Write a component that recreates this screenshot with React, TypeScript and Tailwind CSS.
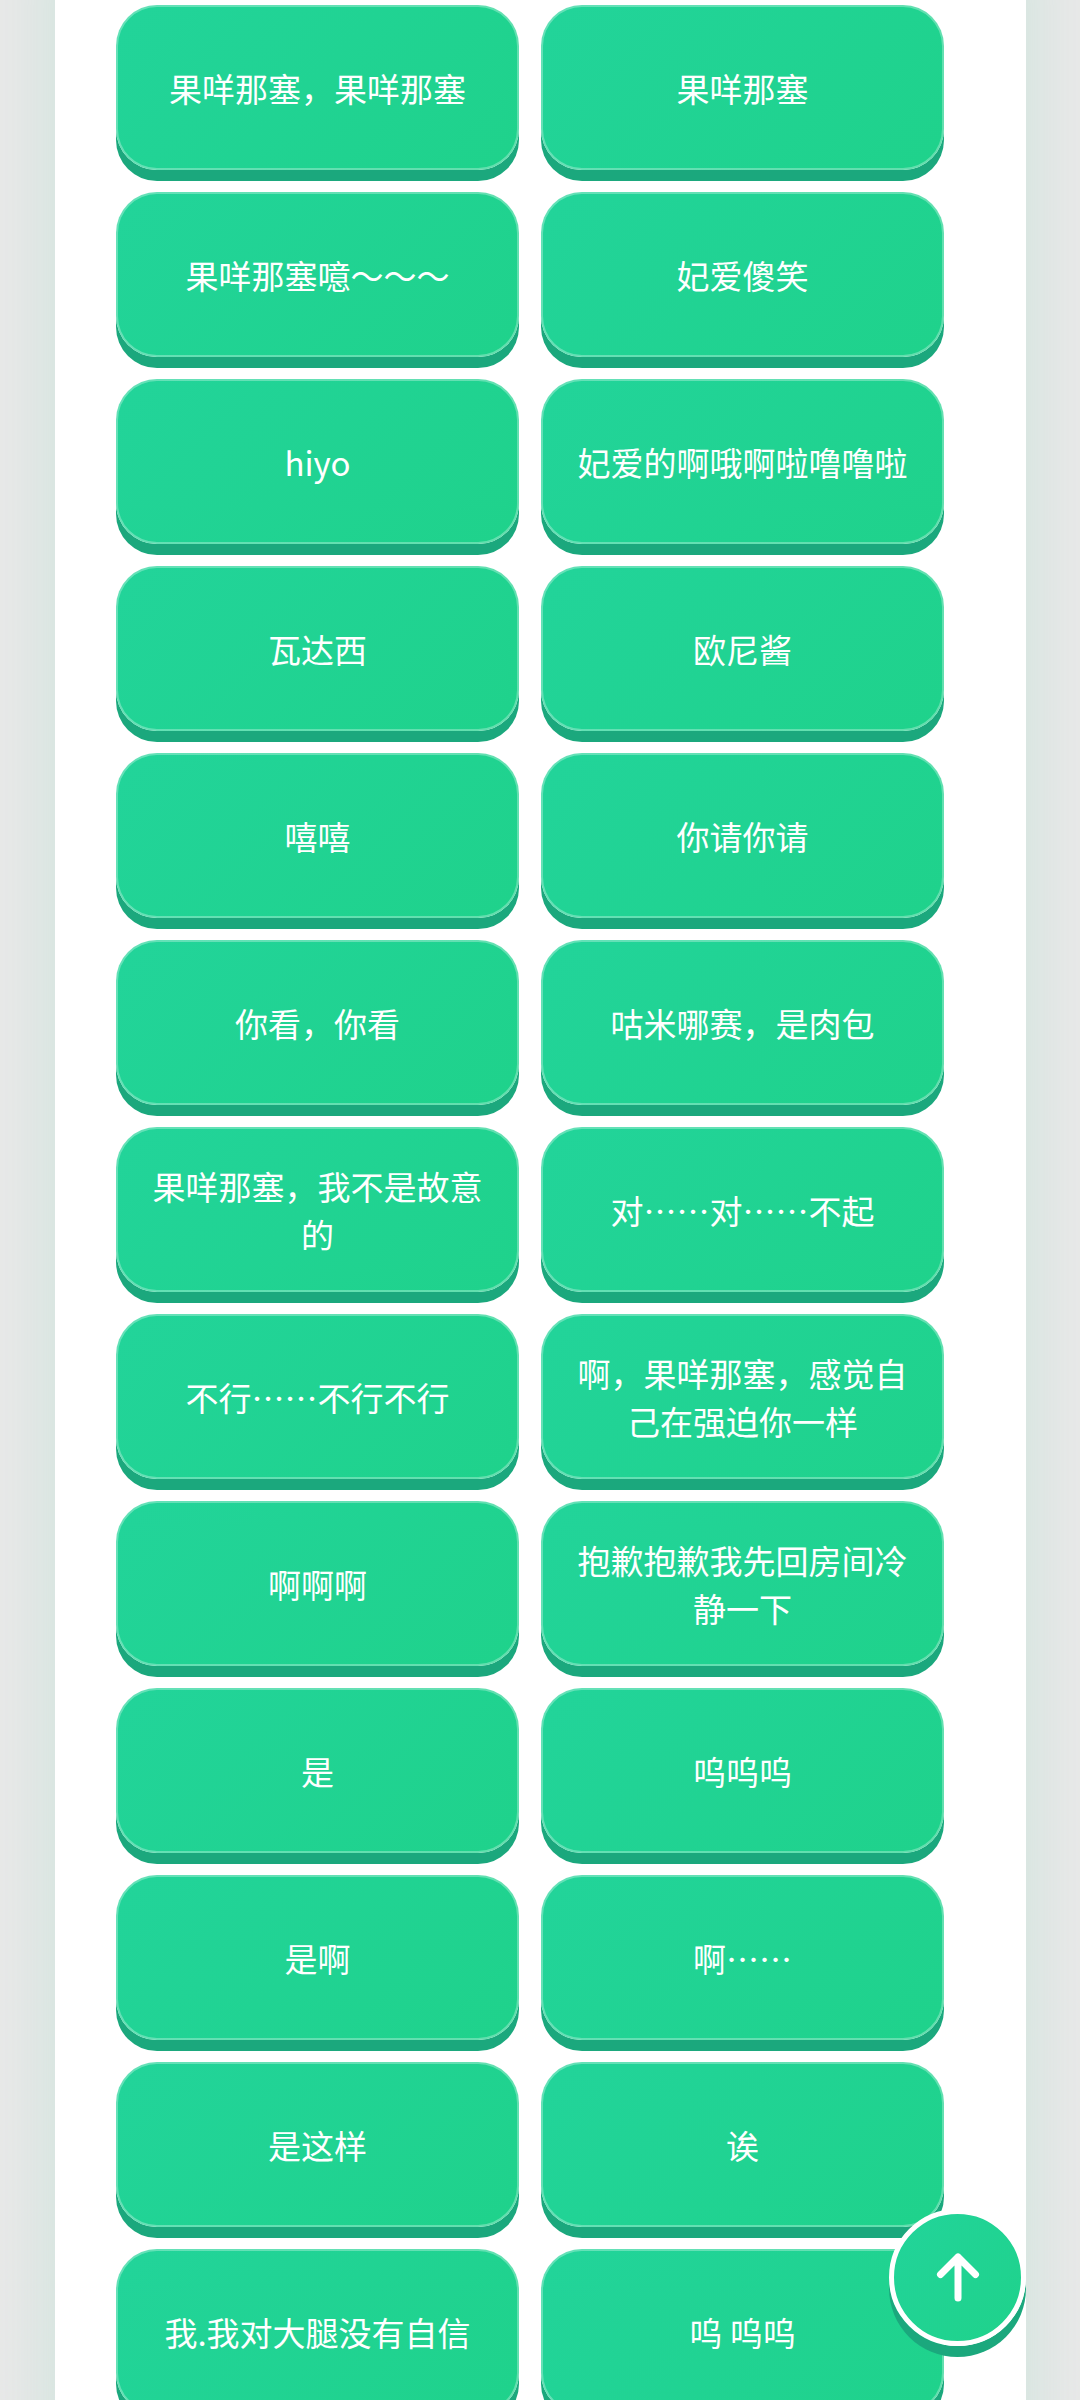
import { useRef } from "react";

const voices = [
  "果咩那塞，果咩那塞",
  "果咩那塞",
  "果咩那塞噫～～～",
  "妃爱傻笑",
  "hiyo",
  "妃爱的啊哦啊啦噜噜啦",
  "瓦达西",
  "欧尼酱",
  "嘻嘻",
  "你请你请",
  "你看，你看",
  "咕米哪赛，是肉包",
  "果咩那塞，我不是故意的",
  "对……对……不起",
  "不行……不行不行",
  "啊，果咩那塞，感觉自己在强迫你一样",
  "啊啊啊",
  "抱歉抱歉我先回房间冷静一下",
  "是",
  "呜呜呜",
  "是啊",
  "啊……",
  "是这样",
  "诶",
  "我.我对大腿没有自信",
  "呜 呜呜",
];

function VoiceButton({ label }: { label: string }) {
  return (
    <button
      type="button"
      className="flex h-[165px] items-center justify-center rounded-[41px] border-2 border-white/30 bg-linear-135 from-[#22d49a] to-[#1fd28b] bg-origin-border px-8 text-center text-[33px] leading-[48px] text-white shadow-[0_11px_0_#1ba87d] active:translate-y-1"
    >
      {label}
    </button>
  );
}

export default function App() {
  const pageRef = useRef<HTMLDivElement>(null);

  const goTop = () => {
    pageRef.current?.scrollTo({ top: 0, behavior: "smooth" });
  };

  return (
    <div
      ref={pageRef}
      lang="zh-CN"
      className="h-screen overflow-y-auto bg-[#e8e8e8] pr-[54px] pl-[55px] font-['Noto_Sans_CJK_SC',sans-serif] [scrollbar-width:none]"
    >
      {/* 语音面板 */}
      <main className="-mt-[60px] min-h-full bg-white pt-[65px] pr-[82px] pb-16 pl-[61px] shadow-[0_0_60px_rgba(32,212,146,0.14)]">
        <div className="grid grid-cols-2 gap-[22px]">
          {voices.map((voice) => (
            <VoiceButton key={voice} label={voice} />
          ))}
        </div>
      </main>

      {/* 返回顶部 */}
      <button
        type="button"
        aria-label="返回顶部"
        onClick={goTop}
        className="fixed right-[54px] bottom-[54px] flex size-[137px] items-center justify-center rounded-full border-[5px] border-white bg-linear-135 from-[#22d49a] to-[#1fd28b] text-white shadow-[0_11px_0_#1ba87d]"
      >
        <svg
          viewBox="0 0 48 54"
          className="h-[54px] w-12"
          fill="none"
          stroke="currentColor"
          strokeWidth="7"
          strokeLinecap="round"
          strokeLinejoin="round"
        >
          <path d="M24 47V6M6.500 23.500L24 6L41.500 23.500" />
        </svg>
      </button>
    </div>
  );
}
